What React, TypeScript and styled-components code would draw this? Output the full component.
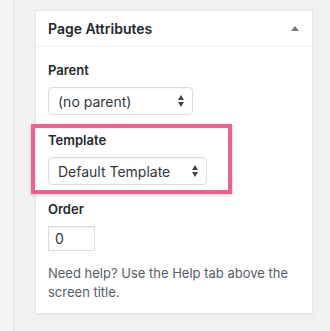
import React from "react";
import styled, { createGlobalStyle } from "styled-components";

const GlobalStyle = createGlobalStyle`
  html, body {
    margin: 0;
    padding: 0;
    background: #f1f1f1;
  }
  body {
    font-family: Inter, "Liberation Sans", Arial, sans-serif;
    color: #23282d;
  }
`;

const Screen = styled.div`
  display: flex;
  height: 331px;
  width: 330px;
  overflow: hidden;
`;

const Gutter = styled.div`
  width: 13px;
  flex: none;
  background: #f4f4f4;
  border-right: 1px solid #e2e2e2;
`;

const Column = styled.div`
  padding: 10px 0 0 21px;
`;

const Panel = styled.div`
  width: 278px;
  height: 304px;
  box-sizing: border-box;
  background: #fff;
  border: 1px solid #e5e5e5;
  box-shadow: 0 1px 1px rgba(0, 0, 0, 0.04);
`;

const PanelHeader = styled.div`
  display: flex;
  align-items: center;
  justify-content: space-between;
  height: 35px;
  padding: 0 13px 0 12px;
  border-bottom: 1px solid #eee;
`;

const Title = styled.h2`
  margin: 0;
  font-size: 14px;
  font-weight: 600;
  line-height: 1.4;
  color: #23282d;
`;

const PanelBody = styled.div`
  padding: 14px 12px 12px;
`;

const Label = styled.div<{ $gap?: number }>`
  margin-top: ${({ $gap }) => $gap ?? 0}px;
  font-size: 13px;
  font-weight: 600;
  line-height: 18px;
  color: #23282d;
`;

const SelectBox = styled.div<{ $width: number }>`
  display: flex;
  align-items: center;
  justify-content: space-between;
  box-sizing: border-box;
  width: ${({ $width }) => $width}px;
  height: 28px;
  margin-top: 8px;
  padding: 0 8px 0 9px;
  background: #fff;
  border: 1px solid #ddd;
  border-radius: 4px;
  box-shadow: inset 0 1px 2px rgba(0, 0, 0, 0.04);
  font-size: 14px;
  color: #32373c;
`;

const Highlight = styled.div`
  box-sizing: border-box;
  width: 201px;
  margin: 9px 0 0 -17px;
  padding: 3px 0 5px 13px;
  border: 4px solid #f0608f;
  box-shadow: 0 1px 3px rgba(0, 0, 0, 0.2);
  background: #fff;
`;

const NumberField = styled.div`
  box-sizing: border-box;
  width: 47px;
  height: 25px;
  margin-top: 8px;
  padding: 0 6px;
  border: 1px solid #ddd;
  box-shadow: inset 0 1px 2px rgba(0, 0, 0, 0.07);
  font-size: 14px;
  line-height: 23px;
  color: #32373c;
`;

const HelpText = styled.p`
  margin: 13px 0 0;
  font-size: 13px;
  line-height: 18.5px;
  color: #555d66;
`;

const Toggle = () => (
  <svg width="8" height="5" viewBox="0 0 8 5">
    <path d="M4 0 L8 5 L0 5 Z" fill="#72777c" />
  </svg>
);

const Stepper = () => (
  <svg width="6" height="12" viewBox="0 0 6 12">
    <path d="M3 0 L6 5 L0 5 Z M3 12 L6 7 L0 7 Z" fill="#444" />
  </svg>
);

const Select = ({ value, width }: { value: string; width: number }) => (
  <SelectBox $width={width}>
    <span>{value}</span>
    <Stepper />
  </SelectBox>
);

const App = () => {
  return (
    <>
      <GlobalStyle />
      <Screen>
        <Gutter />
        <Column>
          <Panel>
            <PanelHeader>
              <Title>Page Attributes</Title>
              <Toggle />
            </PanelHeader>
            <PanelBody>
              <Label>Parent</Label>
              <Select value="(no parent)" width={145} />
              <Highlight>
                <Label>Template</Label>
                <Select value="Default Template" width={159} />
              </Highlight>
              <Label $gap={6}>Order</Label>
              <NumberField>0</NumberField>
              <HelpText>
                Need help? Use the Help tab above the screen title.
              </HelpText>
            </PanelBody>
          </Panel>
        </Column>
      </Screen>
    </>
  );
};

export default App;
